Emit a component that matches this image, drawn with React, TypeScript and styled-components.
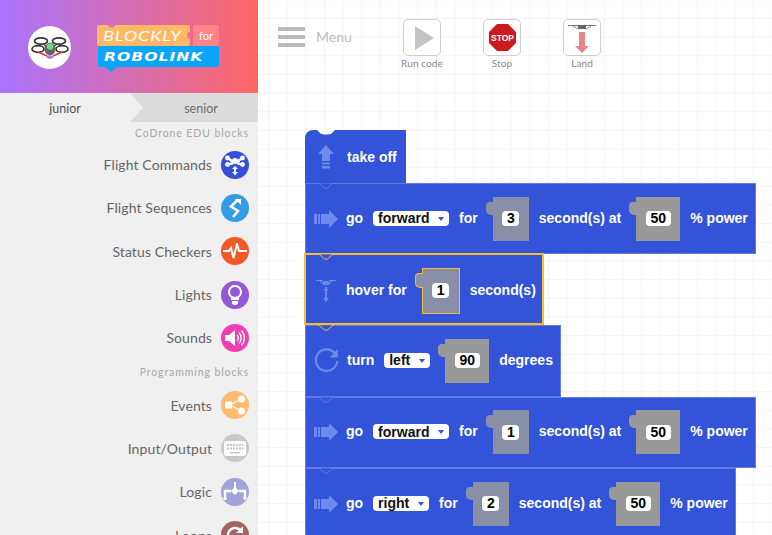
import React from "react";
import styled, { createGlobalStyle, css } from "styled-components";

const GlobalStyle = createGlobalStyle`
  html, body { margin: 0; padding: 0; height: 100%; overflow: hidden; background: #fff; }
  * { box-sizing: border-box; }
`;

const Page = styled.div`
  display: grid;
  grid-template-columns: 258px 1fr;
  width: 772px;
  height: 535px;
  overflow: hidden;
`;

const Sidebar = styled.aside`
  display: flex;
  flex-direction: column;
  background: #f0f0f0;
  font-family: Lato, "Open Sans", sans-serif;
  overflow: hidden;
`;

const Header = styled.header`
  display: flex;
  align-items: center;
  flex: 0 0 93px;
  padding: 0 0 0 28px;
  background: linear-gradient(90deg, #a974ff 0%, #ff6666 100%);
`;

const DroneBadge = styled.div`
  display: flex;
  align-items: center;
  justify-content: center;
  width: 43px;
  height: 43px;
  border-radius: 50%;
  background: #fff;
  margin-top: 1px;
`;

const Logo = styled.div`
  display: flex;
  flex-direction: column;
  width: 122px;
  margin-left: 26px;
  margin-top: -2px;
`;

const LogoTop = styled.div`
  display: flex;
  gap: 3px;
  height: 21px;
`;

const LogoWord = styled.span<{ $stretch: number }>`
  display: inline-block;
  transform: scaleX(${({ $stretch }) => $stretch});
  transform-origin: left center;
`;

const LogoBlockly = styled.div`
  position: relative;
  flex: 0 0 93px;
  padding-left: 6px;
  border-radius: 2px;
  background: #ffb866;
  color: #fff;
  font: italic 400 13px/22px Lato, sans-serif;
  letter-spacing: 0.6px;
  &::before {
    content: "";
    position: absolute;
    left: 10px;
    top: 0;
    width: 9px;
    height: 3px;
    background: #cd7db4;
    clip-path: polygon(0 0, 100% 0, 70% 100%, 30% 100%);
  }
  &::after {
    content: "";
    position: absolute;
    right: 0;
    top: 7px;
    width: 3px;
    height: 7px;
    border-radius: 3px 0 0 3px;
    background: #ee7396;
  }
`;

const LogoFor = styled.div`
  flex: 1;
  border-radius: 2px;
  background: #fd8389;
  color: #fff;
  text-align: center;
  font: 400 11px/21px Lato, sans-serif;
`;

const LogoRobolink = styled.div`
  position: relative;
  height: 21px;
  margin-left: 1px;
  border-radius: 2px;
  background: #08a5fb;
  padding-left: 6px;
  color: #fff;
  font: italic 700 12.5px/21px "DejaVu Sans", sans-serif;
  letter-spacing: 0.8px;
  &::after {
    content: "";
    position: absolute;
    left: 7px;
    bottom: -5px;
    border-left: 6px solid transparent;
    border-right: 6px solid transparent;
    border-top: 5px solid #08a5fb;
  }
`;

const Tabs = styled.div`
  display: grid;
  grid-template-columns: 130px 128px;
  grid-template-rows: 29px;
  flex: 0 0 29px;
  font-size: 12.5px;
  line-height: 31px;
  text-align: center;
`;

const Tab = styled.div<{ $active?: boolean }>`
  ${({ $active }) =>
    $active
      ? css`
          color: #4e4e4e;
        `
      : css`
          padding-left: 14px;
          background: #dcdcdc;
          color: #6e6e6e;
          clip-path: polygon(0 0, 100% 0, 100% 100%, 0 100%, 13px 50%);
        `}
`;

const GroupTitle = styled.div<{ $height: number; $lead: number }>`
  flex: 0 0 ${({ $height }) => $height}px;
  min-height: 0;
  padding-right: 9px;
  color: #a8a8a8;
  font-size: 10.5px;
  letter-spacing: 0.9px;
  line-height: ${({ $lead }) => $lead}px;
  text-align: right;
`;

const Category = styled.div`
  display: flex;
  align-items: center;
  justify-content: flex-end;
  flex: 0 0 43.3px;
  gap: 9px;
  padding-right: 9px;
  color: #666;
  font-size: 14px;
  letter-spacing: 0.1px;
`;

const CategoryIcon = styled.span<{ $color: string }>`
  display: flex;
  align-items: center;
  justify-content: center;
  width: 28px;
  height: 28px;
  border-radius: 50%;
  background: ${({ $color }) => $color};
`;

const Main = styled.main`
  display: flex;
  flex-direction: column;
  background-color: #fff;
  background-image: linear-gradient(#f4f4f4 1px, transparent 1px),
    linear-gradient(90deg, #f4f4f4 1px, transparent 1px);
  background-size: 18.67px 18.67px;
  background-position: 10px 18px;
  overflow: hidden;
`;

const Toolbar = styled.div`
  display: flex;
  flex: 0 0 130px;
  padding: 19px 0 0 20px;
`;

const MenuButton = styled.div`
  display: flex;
  align-items: flex-start;
  flex: 0 0 104px;
  gap: 11px;
  padding-top: 8px;
`;

const Burger = styled.div`
  display: flex;
  flex-direction: column;
  gap: 4px;
  width: 27px;
`;

const BurgerBar = styled.span`
  height: 4px;
  background: #bbb;
`;

const MenuLabel = styled.span`
  color: #bdbdbd;
  font: 400 14px/20px Lato, sans-serif;
`;

const Action = styled.div`
  display: flex;
  flex-direction: column;
  align-items: center;
  flex: 0 0 80px;
`;

const ActionBox = styled.div`
  display: flex;
  align-items: center;
  justify-content: center;
  width: 38px;
  height: 37px;
  border: 1px solid #cfcfcf;
  border-radius: 5px;
  background: #fff;
`;

const PlayGlyph = styled.svg`
  margin-left: 4px;
`;

const ActionLabel = styled.span`
  color: #8a8a8a;
  font: 400 10px/14px Lato, sans-serif;
  letter-spacing: 0.1px;
`;

const Stack = styled.div`
  display: flex;
  flex-direction: column;
  align-items: flex-start;
  padding-left: 47px;
`;

const Block = styled.div<{ $selected?: boolean; $hat?: boolean }>`
  position: relative;
  display: flex;
  align-items: center;
  gap: 10px;
  height: 71.3px;
  padding: 0 7px 0 8px;
  background: #3353d8;
  border: 1px solid #627ae2;
  color: #fff;
  font: 700 14px/16px "Liberation Sans", Arial, sans-serif;
  white-space: nowrap;
  ${({ $hat }) =>
    $hat &&
    css`
      height: 53px;
      gap: 11px;
      padding: 0 9px;
      border: 0;
      border-radius: 8px 0 0 0;
    `}
  ${({ $selected }) =>
    $selected &&
    css`
      z-index: 1;
      height: 72px;
      margin: -1px 0 0 -1px;
      padding: 3px 6px 0 8px;
      border: 2px solid #f6bd2f;
    `}
`;

const Notch = styled.svg`
  position: absolute;
  top: -1px;
  left: 12px;
  width: 16px;
  height: 6px;
  overflow: visible;
`;

const HatCut = styled.svg`
  position: absolute;
  top: 0;
  left: 12px;
  width: 18px;
  height: 5px;
`;

const BlockIcon = styled.span`
  display: flex;
  align-items: center;
  justify-content: center;
  flex: 0 0 24px;
  height: 28px;
  margin-right: -2px;
`;

const Label = styled.span`
  margin-bottom: 2px;
`;

const Dropdown = styled.span<{ $width: number }>`
  display: inline-flex;
  align-items: center;
  justify-content: space-between;
  gap: 6px;
  width: ${({ $width }) => $width}px;
  height: 15px;
  margin-bottom: 1px;
  padding: 0 5px;
  border-radius: 4px;
  background: #fff;
  color: #111;
  font-weight: 700;
  font-size: 14px;
`;

const Caret = styled.span`
  width: 0;
  height: 0;
  margin-top: 1px;
  border-left: 3.5px solid transparent;
  border-right: 3.5px solid transparent;
  border-top: 4px solid #3353d8;
`;

const Slot = styled.span<{ $wide?: boolean; $plain?: boolean; $selected?: boolean }>`
  position: relative;
  display: flex;
  align-items: center;
  justify-content: center;
  width: ${({ $wide }) => ($wide ? 44 : 36)}px;
  height: 44px;
  margin-left: 5px;
  background: ${({ $plain }) => ($plain ? "#999" : "#8a8fa8")};
  ${({ $selected }) => $selected && "width: 38px; height: 46px; border: 1px solid #f6bd2f;"}
  &::before {
    content: "";
    position: absolute;
    left: ${({ $selected }) => ($selected ? -8 : -7)}px;
    top: ${({ $selected }) => ($selected ? 4 : 5)}px;
    width: 7px;
    height: 13px;
    border-radius: 4px 0 0 5px;
    background: ${({ $plain }) => ($plain ? "#999" : "#8a8fa8")};
    ${({ $selected }) => $selected && "border: 1px solid #f6bd2f; border-right: 0;"}
  }
`;

const SlotValue = styled.span`
  min-width: 17px;
  height: 15px;
  padding: 0 4.5px;
  border-radius: 4px;
  background: #fff;
  color: #000;
  font-size: 14px;
  line-height: 15px;
  text-align: center;
`;

const iconStroke = "#7089ea";

const RightArrow = () => (
  <svg width="24" height="18" viewBox="0 0 24 18">
    <path d="M0 4h3v10H0zM4 4h2v10H4zM7 4h8V0l9 9-9 9v-4H7z" fill={iconStroke} />
  </svg>
);

const UpArrow = () => (
  <svg width="16" height="24" viewBox="0 0 16 24">
    <path d="M8 0l8 9h-4v7H4V9H0z" fill={iconStroke} />
    <path d="M4 17.5h8v2H4zM4 21h8v2.5H4z" fill={iconStroke} />
  </svg>
);

const HoverDrone = () => (
  <svg width="20" height="26" viewBox="0 0 20 26" fill="none" stroke="#6f87e6" strokeWidth="1.2">
    <path d="M0 2.500h7M13 2.500h7M4 3l3 3h6l3-3" />
    <rect x="7" y="3" width="6" height="4" fill="#6f87e6" stroke="none" />
    <path d="M10 9v14" strokeWidth="2" />
    <path d="M7 12.500L10 9l3 3.500zM7 20l3 4.500 3-4.500z" fill="#6f87e6" stroke="none" />
  </svg>
);

const TurnIcon = () => (
  <svg width="25" height="25" viewBox="0 0 25 25" fill="none">
    <path d="M21 5.500A10.700 10.700 0 1 0 23.300 13" stroke={iconStroke} strokeWidth="2.200" />
    <path d="M23.800 1v8.400h-8.400z" fill={iconStroke} />
  </svg>
);

const white = { fill: "#fff" };

const categoryGlyphs: Record<string, React.ReactNode> = {
  flight: (
    <svg width="22" height="22" viewBox="0 0 22 22">
      <circle cx="11" cy="7" r="3" {...white} />
      <path d="M3 3l5 3-1 2zM19 3l-5 3 1 2zM4 11l4-3 1 2zM18 11l-4-3-1 2z" {...white} stroke="#fff" />
      <circle cx="3.500" cy="4" r="2.400" {...white} />
      <circle cx="18.500" cy="4" r="2.400" {...white} />
      <circle cx="3.500" cy="10.500" r="2.400" {...white} />
      <circle cx="18.500" cy="10.500" r="2.400" {...white} />
      <path d="M11 12l3 3h-2v3h2l-3 3.500L8 18h2v-3H8z" {...white} />
    </svg>
  ),
  sequences: (
    <svg width="20" height="22" viewBox="0 0 20 22" fill="none">
      <path d="M13 2.500L6 9.500l7 4.500-5 6" stroke="#fff" strokeWidth="2.600" />
      <path d="M10 2h6v6z" {...white} />
    </svg>
  ),
  status: (
    <svg width="24" height="16" viewBox="0 0 24 16" fill="none">
      <path d="M0 8h6l2-3 2.500 10L14 1l2 7h8" stroke="#fff" strokeWidth="2" />
    </svg>
  ),
  lights: (
    <svg width="16" height="22" viewBox="0 0 16 22">
      <path
        fillRule="evenodd"
        d="M8 1a7 7 0 0 1 4 12.700V16H4v-2.300A7 7 0 0 1 8 1zm0 2a5 5 0 0 0-2.500 9.300L8 13l2.500-.7A5 5 0 0 0 8 3z"
        {...white}
      />
      <path d="M5 17h6v2.500l-1.500 1.500h-3L5 19.500z" {...white} />
    </svg>
  ),
  sounds: (
    <svg width="22" height="20" viewBox="0 0 22 20" fill="none">
      <path d="M1 7h4l6-5v16l-6-5H1z" {...white} />
      <path d="M13 7a4 4 0 0 1 0 6M15 4.500a8 8 0 0 1 0 11M17.500 2.500a11 11 0 0 1 0 15" stroke="#fff" strokeWidth="1.300" />
    </svg>
  ),
  events: (
    <svg width="22" height="20" viewBox="0 0 22 20" fill="none">
      <path d="M6 10L17 4M6 10l11 6" stroke="#fff" strokeWidth="1.200" />
      <rect x="1" y="6.500" width="7" height="7" {...white} />
      <circle cx="17.500" cy="4" r="3.500" {...white} />
      <circle cx="17.500" cy="16" r="3.500" {...white} />
    </svg>
  ),
  io: (
    <svg width="22" height="15" viewBox="0 0 22 15">
      <rect width="22" height="15" rx="2" {...white} />
      <path
        d="M3 3h2v2H3zM6 3h2v2H6zM9 3h2v2H9zM12 3h2v2h-2zM15 3h2v2h-2zM18 3h1.500v2H18zM3 6.500h2v2H3zM6 6.500h2v2H6zM9 6.500h2v2H9zM12 6.500h2v2h-2zM15 6.500h2v2h-2zM18 6.500h1.500v2H18zM6 11h10v1.500H6z"
        fill="#c8c8c8"
      />
    </svg>
  ),
  logic: (
    <svg width="24" height="20" viewBox="0 0 24 20" fill="none">
      <path d="M12 0v7" stroke="#fff" strokeWidth="2" />
      <path d="M12 5l4 4-4 4-4-4z" {...white} />
      <path d="M8 9H2v9M16 9h6v9" stroke="#fff" strokeWidth="2.400" />
      <path d="M0 16h4M20 16h4" stroke="#fff" strokeWidth="1" />
    </svg>
  ),
  loops: (
    <svg width="20" height="20" viewBox="0 0 20 20" fill="none">
      <path d="M15 5a7 7 0 1 0 2 6" stroke="#fff" strokeWidth="2.400" />
      <path d="M18 1v7h-7z" {...white} />
    </svg>
  ),
};

type CategoryItem = { name: string; color: string; glyph: string };

const droneCategories: CategoryItem[] = [
  { name: "Flight Commands", color: "#3450d8", glyph: "flight" },
  { name: "Flight Sequences", color: "#339ce6", glyph: "sequences" },
  { name: "Status Checkers", color: "#f15a26", glyph: "status" },
  { name: "Lights", color: "#9258d6", glyph: "lights" },
  { name: "Sounds", color: "#ee40b4", glyph: "sounds" },
];

const programmingCategories: CategoryItem[] = [
  { name: "Events", color: "#ffbb6e", glyph: "events" },
  { name: "Input/Output", color: "#c8c8c8", glyph: "io" },
  { name: "Logic", color: "#a3a3dc", glyph: "logic" },
  { name: "Loops", color: "#a06464", glyph: "loops" },
];

const CategoryRow = ({ item }: { item: CategoryItem }) => (
  <Category>
    {item.name}
    <CategoryIcon $color={item.color}>{categoryGlyphs[item.glyph]}</CategoryIcon>
  </Category>
);

const DroneMark = () => (
  <svg width="38" height="30" viewBox="0 0 38 30" fill="none">
    <g stroke="#333" strokeWidth="1.700">
      <ellipse cx="10" cy="9" rx="6.500" ry="3.200" />
      <ellipse cx="28" cy="9" rx="6.500" ry="3.200" />
      <ellipse cx="7" cy="17" rx="6" ry="3.300" />
      <ellipse cx="31" cy="17" rx="6" ry="3.300" />
    </g>
    <path d="M12 12l4 3M26 12l-4 3" stroke="#444" strokeWidth="1.500" />
    <path d="M7 20l9 4M31 20l-9 4" stroke="#d33" strokeWidth="1.500" />
    <ellipse cx="19" cy="17" rx="5.500" ry="6.500" fill="#666" />
    <circle cx="19" cy="14.500" r="3.200" fill="#6fdc8c" />
    <ellipse cx="19" cy="25" rx="3.500" ry="1.800" fill="#b57be0" />
  </svg>
);

const Hamburger = () => (
  <Burger>
    <BurgerBar />
    <BurgerBar />
    <BurgerBar />
  </Burger>
);

const PlayIcon = () => (
  <PlayGlyph width="19" height="24" viewBox="0 0 19 24">
    <path d="M0 0l19 12L0 24z" fill="#c4c4c4" />
  </PlayGlyph>
);

const StopIcon = () => (
  <svg width="27" height="27" viewBox="0 0 27 27">
    <path d="M8 0h11l8 8v11l-8 8H8l-8-8V8z" fill="#cc1a1f" />
    <text x="13.500" y="17" textAnchor="middle" fill="#fff" fontFamily="Liberation Sans, sans-serif" fontWeight="700" fontSize="8.500">
      STOP
    </text>
  </svg>
);

const LandIcon = () => (
  <svg width="28" height="30" viewBox="0 0 28 30" fill="none">
    <path d="M0 2.500h11M17 2.500h11" stroke="#777" strokeWidth="1.200" />
    <rect x="10" y="2" width="8" height="4" fill="#666" />
    <path d="M5 3l5 3M23 3l-5 3" stroke="#888" />
    <path d="M11 9h6v14h4l-7 7-7-7h4z" fill="#ea8588" />
  </svg>
);

type Piece =
  | { kind: "label"; text: string }
  | { kind: "dropdown"; text: string; width: number }
  | { kind: "slot"; value: string; wide?: boolean; plain?: boolean };

const forward = (secs: string, dir = "forward", width = 76): Piece[] => [
  { kind: "label", text: "go" },
  { kind: "dropdown", text: dir, width },
  { kind: "label", text: "for" },
  { kind: "slot", value: secs },
  { kind: "label", text: "second(s) at" },
  { kind: "slot", value: "50", wide: true, plain: true },
  { kind: "label", text: "% power" },
];

const Pieces = ({ pieces, selected }: { pieces: Piece[]; selected?: boolean }) => (
  <>
    {pieces.map((piece, i) => {
      if (piece.kind === "label") return <Label key={i}>{piece.text}</Label>;
      if (piece.kind === "dropdown") {
        return (
          <Dropdown key={i} $width={piece.width}>
            {piece.text}
            <Caret />
          </Dropdown>
        );
      }
      return (
        <Slot key={i} $wide={piece.wide} $plain={piece.plain} $selected={selected}>
          <SlotValue>{piece.value}</SlotValue>
        </Slot>
      );
    })}
  </>
);

const BlockNotch = ({ color }: { color: string }) => (
  <Notch viewBox="0 0 16 6">
    <path d="M0 .5h1.500l5 4.500h3l5-4.500H16" fill="#3353d8" stroke={color} strokeWidth="1" />
  </Notch>
);

export default function App() {
  return (
    <Page>
      <GlobalStyle />
      <Sidebar>
        <Header>
          <DroneBadge>
            <DroneMark />
          </DroneBadge>
          <Logo>
            <LogoTop>
              <LogoBlockly>
                <LogoWord $stretch={1.4}>BLOCKLY</LogoWord>
              </LogoBlockly>
              <LogoFor>for</LogoFor>
            </LogoTop>
            <LogoRobolink>
              <LogoWord $stretch={1.25}>ROBOLINK</LogoWord>
            </LogoRobolink>
          </Logo>
        </Header>
        <Tabs>
          <Tab $active>junior</Tab>
          <Tab>senior</Tab>
        </Tabs>
        <GroupTitle $height={21} $lead={22}>CoDrone EDU blocks</GroupTitle>
        {droneCategories.map((item) => (
          <CategoryRow key={item.name} item={item} />
        ))}
        <GroupTitle $height={24} $lead={26}>Programming blocks</GroupTitle>
        {programmingCategories.map((item) => (
          <CategoryRow key={item.name} item={item} />
        ))}
      </Sidebar>
      <Main>
        <Toolbar>
          <MenuButton>
            <Hamburger />
            <MenuLabel>Menu</MenuLabel>
          </MenuButton>
          <Action>
            <ActionBox>
              <PlayIcon />
            </ActionBox>
            <ActionLabel>Run code</ActionLabel>
          </Action>
          <Action>
            <ActionBox>
              <StopIcon />
            </ActionBox>
            <ActionLabel>Stop</ActionLabel>
          </Action>
          <Action>
            <ActionBox>
              <LandIcon />
            </ActionBox>
            <ActionLabel>Land</ActionLabel>
          </Action>
        </Toolbar>
        <Stack>
          <Block $hat>
            <HatCut viewBox="0 0 18 5">
              <path d="M0 0h18l-4 4h-1q-4 1-8 0H4z" fill="#fff" />
            </HatCut>
            <BlockIcon>
              <UpArrow />
            </BlockIcon>
            <span>take off</span>
          </Block>
          <Block>
            <BlockNotch color="#627ae2" />
            <BlockIcon>
              <RightArrow />
            </BlockIcon>
            <Pieces pieces={forward("3")} />
          </Block>
          <Block $selected>
            <BlockNotch color="#f6bd2f" />
            <BlockIcon>
              <HoverDrone />
            </BlockIcon>
            <Pieces
              selected
              pieces={[
                { kind: "label", text: "hover for" },
                { kind: "slot", value: "1" },
                { kind: "label", text: "second(s)" },
              ]}
            />
          </Block>
          <Block>
            <BlockNotch color="#f6bd2f" />
            <BlockIcon>
              <TurnIcon />
            </BlockIcon>
            <Pieces
              pieces={[
                { kind: "label", text: "turn" },
                { kind: "dropdown", text: "left", width: 46 },
                { kind: "slot", value: "90", wide: true, plain: true },
                { kind: "label", text: "degrees" },
              ]}
            />
          </Block>
          <Block>
            <BlockNotch color="#627ae2" />
            <BlockIcon>
              <RightArrow />
            </BlockIcon>
            <Pieces pieces={forward("1")} />
          </Block>
          <Block>
            <BlockNotch color="#627ae2" />
            <BlockIcon>
              <RightArrow />
            </BlockIcon>
            <Pieces pieces={forward("2", "right", 56)} />
          </Block>
        </Stack>
      </Main>
    </Page>
  );
}
